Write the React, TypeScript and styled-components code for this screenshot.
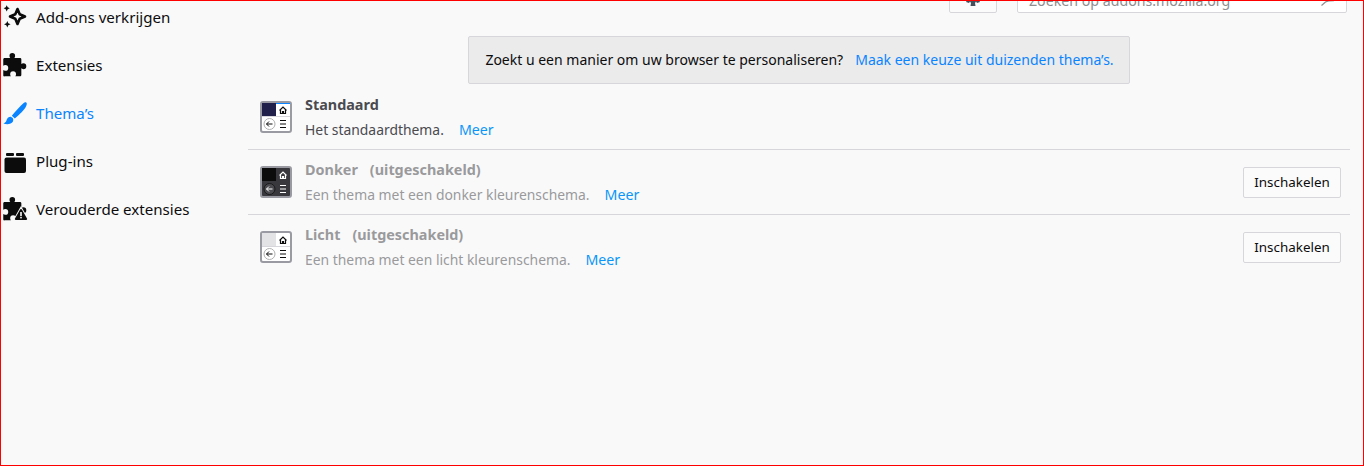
import React from 'react';
import styled, { createGlobalStyle } from 'styled-components';

const GlobalStyle = createGlobalStyle`
  html, body {
    margin: 0;
    padding: 0;
    background: #f9f9fa;
  }
  * {
    box-sizing: border-box;
  }
`;

const Frame = styled.div`
  width: 1364px;
  height: 466px;
  border: 1px solid #f00;
  overflow: hidden;
  display: flex;
  background: #f9f9fa;
  color: #0c0c0d;
  font-family: "Noto Sans", "Open Sans", sans-serif;
  font-size: 14px;
`;

const Sidebar = styled.nav`
  width: 247px;
  flex: none;
  margin-top: -7px;
  display: flex;
  flex-direction: column;
`;

const NavItem = styled.div<{ $active?: boolean }>`
  height: 48px;
  display: flex;
  align-items: center;
  gap: 9px;
  padding-left: 2px;
  font-size: 15.1px;
  color: ${(p) => (p.$active ? '#0a84ff' : '#0c0c0d')};
  svg {
    flex: none;
    overflow: visible;
    color: ${(p) => (p.$active ? '#0a84ff' : '#0c0c0d')};
  }
`;

const NavLabel = styled.span`
  margin-bottom: 2px;
`;

const Main = styled.main`
  width: 1102px;
  flex: none;
  display: flex;
  flex-direction: column;
`;

const Header = styled.header`
  height: 12px;
  overflow: hidden;
  display: flex;
  justify-content: flex-end;
  align-items: flex-end;
  gap: 20px;
  margin-right: 3px;
`;

const GearButton = styled.div`
  width: 48px;
  height: 30px;
  flex: none;
  background: #fbfbfb;
  border: 1px solid #d7d7db;
  border-radius: 2px;
  display: flex;
  align-items: flex-end;
  justify-content: center;
  padding-bottom: 6px;
`;

const SearchBox = styled.div`
  width: 330px;
  height: 26px;
  flex: none;
  background: #fff;
  border: 1px solid #d7d7db;
  border-radius: 2px;
  display: flex;
  align-items: center;
  justify-content: space-between;
  padding: 0 11px 0 11px;
  color: #8e8e90;
  font-size: 14.2px;
  svg {
    align-self: flex-end;
    margin-bottom: 6px;
  }
`;

const Notice = styled.div`
  align-self: center;
  margin-top: 23px;
  height: 48px;
  padding: 0 15px 2px 16px;
  display: flex;
  align-items: center;
  gap: 12px;
  background: #ebebeb;
  border: 1px solid #d7d7db;
  border-radius: 2px;
  font-size: 14px;
  white-space: nowrap;
`;

const NoticeLink = styled.span`
  color: #0a84ff;
`;

const ThemeRow = styled.div<{ $first?: boolean }>`
  height: 65px;
  display: flex;
  align-items: flex-start;
  padding: 10px 9px 0 12px;
  border-top: 1px solid ${(p) => (p.$first ? 'transparent' : '#d7d7db')};
`;

const Preview = styled.svg`
  flex: none;
  margin-top: 6px;
`;

const ThemeText = styled.div<{ $off?: boolean }>`
  flex: 1;
  margin-left: 13px;
  display: flex;
  flex-direction: column;
  color: ${(p) => (p.$off ? '#9a9a9c' : '#4a4a4f')};
`;

const ThemeTitle = styled.div`
  font-weight: 700;
  font-size: 14.4px;
  line-height: 20px;
  display: flex;
  gap: 12px;
`;

const ThemeDesc = styled.div`
  margin-top: 5px;
  line-height: 20px;
  font-size: 13.9px;
  display: flex;
  gap: 15px;
`;

const More = styled.span`
  color: #0996f8;
  font-size: 14.2px;
`;

const EnableButton = styled.button`
  flex: none;
  align-self: flex-start;
  margin-top: 7px;
  width: 98px;
  height: 31px;
  padding: 0 0 2px;
  background: #fbfbfb;
  border: 1px solid #d7d7db;
  border-radius: 2px;
  color: #0c0c0d;
  font-family: inherit;
  font-size: 13.4px;
`;

const PUZZLE =
  'M10 1.5a2.5 2.5 0 0 1 2.5 2.5c0 .8-.4 1.3-.7 1.8h5c.8 0 1.2.5 1.2 1.2v4.2c.5-.4 1-.7 1.8-.7a2.6 2.6 0 0 1 0 5.2c-.8 0-1.3-.3-1.8-.7v5.6c0 .8-.5 1.4-1.2 1.4h-4.2c.4-.5.7-1 .7-1.8a2.6 2.6 0 0 0-5.2 0c0 .8.3 1.3.7 1.8H3.2C2.5 22.5 2 22 2 21.2v-4.7c.5.4 1 .7 1.8.7a2.6 2.6 0 0 0 0-5.2c-.8 0-1.3.3-1.8.7V7c0-.7.5-1.2 1.2-1.2h5c-.3-.5-.7-1-.7-1.8A2.5 2.5 0 0 1 10 1.5z';

const NavIcon: React.FC<{ children: React.ReactNode }> = ({ children }) => (
  <svg width="24" height="24" viewBox="0 0 24 24" fill="currentColor">
    {children}
  </svg>
);

const ThemePreview: React.FC<{ block: string; dark?: boolean; accent?: boolean }> = ({ block, dark, accent }) => {
  const bg = dark ? '#38383d' : '#fff';
  const fg = dark ? '#fff' : '#0c0c0d';
  return (
    <Preview width="32" height="32" viewBox="0 0 32 32">
      <rect x="1" y="1" width="30" height="30" rx="2" fill={bg} stroke="#9a9aa2" strokeWidth="2" />
      <rect x="2" y="2" width="14" height="13" fill={block} />
      {accent && <rect x="16" y="2" width="14" height="1" fill="#0a84ff" />}
      {!dark && <rect x="2" y="15" width="28" height="1" fill="#d7d7db" />}
      <path
        d="M19.5 9.5 23 6l3.5 3.5M20.5 9v3.5h5V9M22.5 12.5V10.5h1v2"
        fill="none"
        stroke={fg}
        strokeWidth="1.2"
      />
      <circle cx="9.5" cy="23" r="5.5" fill={dark ? '#4a4a4f' : '#fff'} stroke={dark ? '#1a1a1a' : '#b1b1b3'} />
      <path d="M12.5 23h-6M9 20.5 6.5 23 9 25.5" fill="none" stroke={fg} strokeWidth="1" />
      <path d="M20 19.5h6M20 23h6M20 26.5h6" stroke={fg} strokeWidth="1" />
    </Preview>
  );
};

const App: React.FC = () => (
  <>
    <GlobalStyle />
    <Frame>
      <Sidebar>
        <NavItem>
          <NavIcon>
            <path
              d="M14.5 3 16.7 8.3 22 10.5 16.7 12.7 14.5 18 12.3 12.7 7 10.5 12.3 8.3z"
              fill="none"
              stroke="currentColor"
              strokeWidth="2.6"
              strokeLinejoin="round"
            />
            <path d="M3.7-.8 4.7 1.3 6.8 2.3 4.7 3.3 3.7 5.4 2.7 3.3.6 2.3 2.7 1.3z" />
            <path d="M4.3 15 5.3 17.3 7.6 18.3 5.3 19.3 4.3 21.6 3.3 19.3 1 18.3 3.3 17.3z" />
          </NavIcon>
          <NavLabel>Add-ons verkrijgen</NavLabel>
        </NavItem>
        <NavItem>
          <NavIcon>
            <path d={PUZZLE} transform="translate(-2 -2.6) scale(1.13)" />
          </NavIcon>
          <NavLabel>Extensies</NavLabel>
        </NavItem>
        <NavItem $active>
          <NavIcon>
            <path d="M23.5.8c-.8-.8-2-.6-2.8.1C17.5 3.8 12.5 9 8.8 13.7l3 2.9c4.600-3.800 9.900-8.800 11.400-12.500.4-1.100 1-2.300.3-3.300z" />
            <path d="M7.800 14.700C5.300 14.900 4 16.300 3.500 18.300c-.3 1.300-1 2.300-3 3.200 3 1.300 7.800 1 9.300-1.700.8-1.400.5-3.100-.1-3.700z" />
          </NavIcon>
          <NavLabel>Thema’s</NavLabel>
        </NavItem>
        <NavItem>
          <NavIcon>
            <rect x="1.500" y="7.500" width="21.500" height="15.500" rx="2" />
            <rect x="3" y="3" width="8" height="3" rx="1" />
            <rect x="13" y="3" width="8" height="3" rx="1" />
          </NavIcon>
          <NavLabel>Plug-ins</NavLabel>
        </NavItem>
        <NavItem>
          <NavIcon>
            <path d={PUZZLE} transform="translate(-2 -2.6) scale(1.13)" />
            <path d="M18 8 27 24H9z" fill="#f9f9fa" />
            <path d="M18 11c.4 0 .7.2.9.5l5.100 9c.4.7 0 1.500-.8 1.500H12.800c-.8 0-1.200-.8-.8-1.500l5.100-9c.2-.3.5-.5.9-.5z" />
            <rect x="17.200" y="14" width="1.600" height="4" fill="#f9f9fa" />
            <rect x="17.200" y="18.800" width="1.600" height="1.600" fill="#f9f9fa" />
          </NavIcon>
          <NavLabel>Verouderde extensies</NavLabel>
        </NavItem>
      </Sidebar>
      <Main>
        <Header>
          <GearButton>
            <svg width="14" height="6" viewBox="0 0 14 6" fill="#45505c">
              <polygon points="1,0 13,0 14,2 11,3 10,1.500 9,3 9.500,6 4.500,6 5,3 4,1.500 3,3 0,2" />
            </svg>
          </GearButton>
          <SearchBox>
            <span>Zoeken op addons.mozilla.org</span>
            <svg width="14" height="6" viewBox="0 0 14 6" fill="none" stroke="#8e8e90" strokeWidth="1.200">
              <path d="M.5 5.500 4.500 2C6.500.8 10 .6 13 .6" />
            </svg>
          </SearchBox>
        </Header>
        <Notice>
          <span>Zoekt u een manier om uw browser te personaliseren?</span>
          <NoticeLink>Maak een keuze uit duizenden thema’s.</NoticeLink>
        </Notice>
        <ThemeRow $first>
          <ThemePreview block="#20204a" accent />
          <ThemeText>
            <ThemeTitle>
              <span>Standaard</span>
            </ThemeTitle>
            <ThemeDesc>
              <span>Het standaardthema.</span>
              <More>Meer</More>
            </ThemeDesc>
          </ThemeText>
        </ThemeRow>
        <ThemeRow>
          <ThemePreview block="#0c0c0d" dark />
          <ThemeText $off>
            <ThemeTitle>
              <span>Donker</span>
              <span>(uitgeschakeld)</span>
            </ThemeTitle>
            <ThemeDesc>
              <span>Een thema met een donker kleurenschema.</span>
              <More>Meer</More>
            </ThemeDesc>
          </ThemeText>
          <EnableButton>Inschakelen</EnableButton>
        </ThemeRow>
        <ThemeRow>
          <ThemePreview block="#e3e3e5" />
          <ThemeText $off>
            <ThemeTitle>
              <span>Licht</span>
              <span>(uitgeschakeld)</span>
            </ThemeTitle>
            <ThemeDesc>
              <span>Een thema met een licht kleurenschema.</span>
              <More>Meer</More>
            </ThemeDesc>
          </ThemeText>
          <EnableButton>Inschakelen</EnableButton>
        </ThemeRow>
      </Main>
    </Frame>
  </>
);

export default App;
